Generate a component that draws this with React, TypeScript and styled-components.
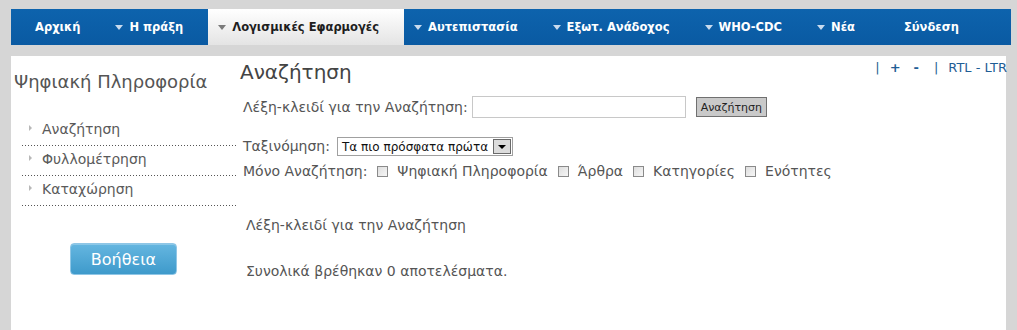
import React from "react";
import styled, { createGlobalStyle } from "styled-components";

const Global = createGlobalStyle`
  html, body { margin: 0; padding: 0; }
  body {
    background: #d6d6d6;
    font-family: "DejaVu Sans", Verdana, sans-serif;
    overflow: hidden;
  }
`;

const Page = styled.div`
  padding: 9px 6px 0 11px;
  width: 1017px;
  box-sizing: border-box;
`;

const Nav = styled.nav`
  display: flex;
  height: 36px;
  background: linear-gradient(#0d63ad, #0a5aa2);
  width: 1000px;
`;

const NavItem = styled.a<{ $active?: boolean; $drop?: boolean }>`
  position: relative;
  display: flex;
  align-items: center;
  padding: 0 25px 0 24px;
  font: bold 11.5px "DejaVu Sans", Verdana, sans-serif;
  color: ${(p) => (p.$active ? "#1e1e1e" : "#ffffff")};
  background: ${(p) =>
    p.$active ? "linear-gradient(#ffffff, #e4e4e4)" : "transparent"};
  text-decoration: none;
  white-space: nowrap;
  &::before {
    content: "";
    display: ${(p) => (p.$drop ? "block" : "none")};
    position: absolute;
    left: 10px;
    top: 16px;
    border-left: 4px solid transparent;
    border-right: 4px solid transparent;
    border-top: 5px solid ${(p) => (p.$active ? "#7a7a7a" : "#c9dbee")};
  }
`;

const Panel = styled.div`
  margin-top: 11px;
  width: 995px;
  height: 274px;
  background: #ffffff;
  display: grid;
  grid-template-columns: 227px 1fr;
`;

const Sidebar = styled.aside`
  padding: 15px 0 0 3px;
`;

const SideTitle = styled.h2`
  margin: 0 0 23px 0;
  font: 18px "DejaVu Sans", Verdana, sans-serif;
  color: #555555;
  line-height: 22px;
`;

const SideList = styled.ul`
  list-style: none;
  margin: 0;
  padding: 0 0 0 8px;
`;

const SideItem = styled.li`
  position: relative;
  height: 30px;
  box-sizing: border-box;
  padding: 4px 0 0 20px;
  background: linear-gradient(to right, #555 1px, transparent 1px) left bottom /
    3px 1px repeat-x;
  font: 14px "DejaVu Sans", Verdana, sans-serif;
  color: #5a5a5a;
  line-height: 18px;
  &::before {
    content: "";
    position: absolute;
    left: 7px;
    top: 9px;
    border-top: 3px solid transparent;
    border-bottom: 3px solid transparent;
    border-left: 3px solid #b8b8b8;
  }
`;

const HelpWrap = styled.div`
  display: flex;
  padding: 37px 0 0 56px;
`;

const HelpButton = styled.button`
  width: 107px;
  height: 32px;
  border: 1px solid #8fc6e6;
  border-radius: 4px;
  background: linear-gradient(#65b6e0, #3e9acb);
  color: #ffffff;
  font: 16px "DejaVu Sans", Verdana, sans-serif;
  padding: 0;
  box-shadow: inset 0 1px 0 rgba(255, 255, 255, 0.25);
`;

const Main = styled.main`
  padding: 3px 0 0 2px;
  color: #555555;
`;

const HeadRow = styled.div`
  display: flex;
  justify-content: space-between;
  align-items: flex-start;
`;

const Heading = styled.h1`
  margin: 0;
  font: 20px "DejaVu Sans", Verdana, sans-serif;
  color: #444444;
  line-height: 26px;
`;

const Tools = styled.div`
  display: flex;
  gap: 10px;
  padding-top: 1px;
  margin-right: -1px;
  font: 13px "DejaVu Sans", Verdana, sans-serif;
  color: #245f91;
`;

const ToolLink = styled.span<{ $bold?: boolean; $after?: number }>`
  font-weight: ${(p) => (p.$bold ? "bold" : "normal")};
  margin-right: ${(p) => p.$after ?? 0}px;
  color: #1f5e96;
`;

const Form = styled.div`
  padding-left: 3px;
`;

const Row = styled.div<{ $top: number }>`
  display: flex;
  align-items: center;
  margin-top: ${(p) => p.$top}px;
  font: 14px "DejaVu Sans", Verdana, sans-serif;
  line-height: 17px;
  color: #555555;
  white-space: nowrap;
`;

const TextInput = styled.input`
  width: 214px;
  height: 22px;
  box-sizing: border-box;
  margin-left: 4px;
  border: 1px solid #c8c8c8;
  padding: 0 3px;
`;

const SearchButton = styled.button`
  margin-left: 10px;
  height: 20px;
  padding: 0 4px;
  background: #c9c9c9;
  border: 1px solid #707070;
  font: 11px "DejaVu Sans", Verdana, sans-serif;
  color: #222;
  border-radius: 0;
`;

const SelectBox = styled.div`
  display: flex;
  align-items: center;
  margin-left: 7px;
  height: 19px;
  box-sizing: border-box;
  border: 1px solid #a0a0a0;
  font: 12px "DejaVu Sans", Verdana, sans-serif;
  color: #111;
  padding-left: 4px;
`;

const SelectArrow = styled.span`
  display: flex;
  align-items: center;
  justify-content: center;
  width: 18px;
  height: 15px;
  margin: 0 1px 0 5px;
  box-sizing: border-box;
  background: #dcdcdc;
  border: 1px solid #6a6a6a;
  &::after {
    content: "";
    border-left: 4px solid transparent;
    border-right: 4px solid transparent;
    border-top: 4px solid #000;
  }
`;

const Check = styled.span`
  display: inline-block;
  width: 11px;
  height: 11px;
  box-sizing: border-box;
  border: 1px solid #8a8a8a;
  background: linear-gradient(135deg, #dedede, #f6f6f6);
  margin: 0 9px 0 10px;
`;

const Result = styled.p<{ $top: number }>`
  margin: ${(p) => p.$top}px 0 0 6px;
  font: 14px "DejaVu Sans", Verdana, sans-serif;
  color: #555555;
  line-height: 18px;
`;

const navItems: { label: string; drop: boolean; active?: boolean }[] = [
  { label: "Αρχική", drop: false },
  { label: "Η πράξη", drop: true },
  { label: "Λογισμικές Εφαρμογές", drop: true, active: true },
  { label: "Αυτεπιστασία", drop: true },
  { label: "Εξωτ. Ανάδοχος", drop: true },
  { label: "WHO-CDC", drop: true },
  { label: "Νέα", drop: true },
  { label: "Σύνδεση", drop: false },
];

export default function App() {
  return (
    <>
      <Global />
      <Page>
        <Nav>
          {navItems.map((n) => (
            <NavItem key={n.label} $active={n.active} $drop={n.drop}>
              {n.label}
            </NavItem>
          ))}
        </Nav>
        <Panel>
          <Sidebar>
            <SideTitle>Ψηφιακή Πληροφορία</SideTitle>
            <SideList>
              <SideItem>Αναζήτηση</SideItem>
              <SideItem>Φυλλομέτρηση</SideItem>
              <SideItem>Καταχώρηση</SideItem>
            </SideList>
            <HelpWrap>
              <HelpButton>Βοήθεια</HelpButton>
            </HelpWrap>
          </Sidebar>
          <Main>
            <HeadRow>
              <Heading>Αναζήτηση</Heading>
              <Tools>
                <span>|</span>
                <ToolLink $bold $after={3}>+</ToolLink>
                <ToolLink $bold $after={5}>-</ToolLink>
                <span>|</span>
                <ToolLink>RTL - LTR</ToolLink>
              </Tools>
            </HeadRow>
            <Form>
              <Row $top={11}>
                Λέξη-κλειδί για την Αναζήτηση:
                <TextInput />
                <SearchButton>Αναζήτηση</SearchButton>
              </Row>
              <Row $top={19}>
                Ταξινόμηση:
                <SelectBox>
                  Τα πιο πρόσφατα πρώτα
                  <SelectArrow />
                </SelectBox>
              </Row>
              <Row $top={7}>
                Μόνο Αναζήτηση:
                <Check />
                Ψηφιακή Πληροφορία
                <Check />
                Άρθρα
                <Check />
                Κατηγορίες
                <Check />
                Ενότητες
              </Row>
            </Form>
            <Result $top={36}>Λέξη-κλειδί για την Αναζήτηση</Result>
            <Result $top={28}>Συνολικά βρέθηκαν 0 αποτελέσματα.</Result>
          </Main>
        </Panel>
      </Page>
    </>
  );
}
